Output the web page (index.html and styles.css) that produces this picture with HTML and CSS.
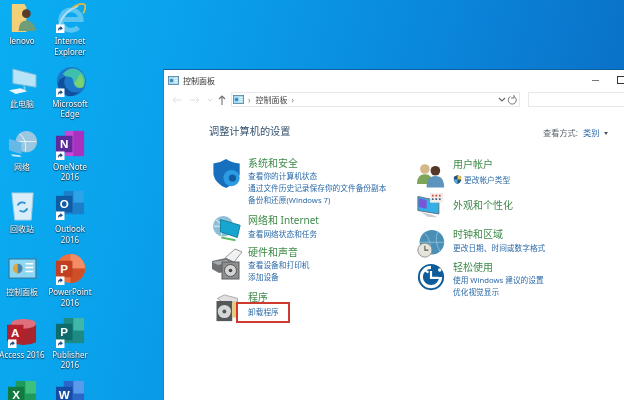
FILE: index.html
```html
<!DOCTYPE html>
<html lang="zh-CN">
<head>
    <meta charset="UTF-8">
    <title>控制面板</title>
    <link rel="stylesheet" href="styles.css">
</head>
<body>
<svg class="defs" width="0" height="0">
    <symbol id="arrow" viewBox="0 0 10 10">
        <rect width="10" height="10" fill="#fff"/>
        <path d="M2.5 8V5.5Q2.5 3.5 5 3.500V2L8 4.500 5 7V5.500Q3.500 5.500 2.500 8Z" fill="#1d4f8f"/>
    </symbol>
    <symbol id="cp" viewBox="0 0 14 11">
        <rect x=".5" y=".5" width="13" height="10" fill="#a9dcf2" stroke="#4a7f9c"/>
        <circle cx="4.500" cy="5.500" r="2.200" fill="#3f88b5"/>
        <path d="M8 3h4M8 5.500h4M8 8h4" stroke="#fff"/>
    </symbol>
</svg>

<div class="desktop">
    <div class="shortcut">
        <svg viewBox="0 0 32 32"><path d="M5 1h13l2 3v26H5z" fill="#f3cf77"/><circle cx="20" cy="11" r="4.500" fill="#5a3b2a"/><path d="M12 29q0-11 8-11t10 11z" fill="#6f9d7a"/></svg>
        <span>lenovo</span>
    </div>
    <div class="shortcut">
        <svg viewBox="0 0 32 32"><path d="M7 17h20A10.500 10.500 0 1 0 24 25" fill="none" stroke="#5cc4f0" stroke-width="5"/><path d="M4 24Q8 9 24 3" fill="none" stroke="#a9e0f6" stroke-width="2"/><path d="M18 5Q27-1 31 2q1 4-2 9" fill="none" stroke="#e3b93e" stroke-width="1.800"/><use href="#arrow" x="1" y="22" width="9" height="9"/></svg>
        <span>Internet<br>Explorer</span>
    </div>
    <div class="shortcut">
        <svg viewBox="0 0 32 32"><path d="M6 3l24 6v13L6 18z" fill="#b7e4f6" stroke="#6bb7dc"/><path d="M18 21v4" stroke="#8ccbe8" stroke-width="2"/><path d="M2 25l12-2 7 3-12 3z" fill="#eaf6fb"/></svg>
        <span>此电脑</span>
    </div>
    <div class="shortcut">
        <svg viewBox="0 0 32 32"><circle cx="17" cy="16" r="15" fill="#1b78c9"/><path d="M8 8Q18-3 29 8q4 8 0 14-8 3-10-5 0-6-5-6-4 0-6-3z" fill="#3fbfae"/><path d="M26 8q5 6 3 14-6 2-9-4z" fill="#7bd06f"/><path d="M3 20q0-8 8-9-4 8 3 14 6 4 12 1-6 6-13 5-8-3-10-11z" fill="#0f4f9e"/><use href="#arrow" x="1" y="23" width="9" height="9"/></svg>
        <span>Microsoft<br>Edge</span>
    </div>
    <div class="shortcut">
        <svg viewBox="0 0 32 32"><circle cx="20" cy="13" r="11" fill="#9cc7e0"/><path d="M13 5q8 6 6 18M12 13h18" stroke="#e8f4fa" fill="none"/><path d="M2 10l13 4v12L2 22z" fill="#66b9e6"/><path d="M4 26l9 1 2 2-9-1z" fill="#d8eef8"/></svg>
        <span>网络</span>
    </div>
    <div class="shortcut">
        <svg viewBox="0 0 32 32"><rect x="10" y="2" width="20" height="26" fill="#c648d6"/><rect x="19" y="2" width="11" height="26" fill="#a832bd"/><rect x="1" y="7" width="17" height="17" fill="#5c2a9c"/><text x="9.500" y="20" class="badge">N</text><use href="#arrow" x="1" y="23" width="9" height="9"/></svg>
        <span>OneNote<br>2016</span>
    </div>
    <div class="shortcut">
        <svg viewBox="0 0 32 32"><path d="M5 2h22l-2 28H8z" fill="#d9eef8" stroke="#9fcfe6"/><path d="M11 15a5 5 0 0 1 8-2M21 18a5 5 0 0 1-8 2" fill="none" stroke="#2f93cf" stroke-width="2"/></svg>
        <span>回收站</span>
    </div>
    <div class="shortcut">
        <svg viewBox="0 0 32 32"><rect x="9" y="0" width="21" height="24" fill="#1c7fc9"/><rect x="19" y="0" width="11" height="12" fill="#2ba3e6"/><rect x="1" y="5" width="17" height="17" fill="#0f5ca5"/><text x="9.500" y="18" class="badge">O</text><use href="#arrow" x="1" y="21" width="9" height="9"/></svg>
        <span>Outlook<br>2016</span>
    </div>
    <div class="shortcut">
        <svg viewBox="0 0 32 32"><rect x="2" y="5" width="28" height="20" fill="#8fd6f2" stroke="#2c86b4" stroke-width="1.500"/><circle cx="11" cy="15" r="5" fill="#e3a63c"/><path d="M11 15V10a5 5 0 0 1 0 10z" fill="#3f88b5"/><path d="M19 10h8M19 14h8M19 18h8" stroke="#fff" stroke-width="1.500"/></svg>
        <span>控制面板</span>
    </div>
    <div class="shortcut">
        <svg viewBox="0 0 32 32"><circle cx="16" cy="15" r="15" fill="#ea6f41"/><path d="M16 0a15 15 0 0 1 15 15H16z" fill="#f28d66"/><path d="M16 15h15a15 15 0 0 1-15 15z" fill="#cf4f27"/><rect x="1" y="7" width="17" height="17" fill="#c0401f"/><text x="9.500" y="20" class="badge">P</text><use href="#arrow" x="1" y="23" width="9" height="9"/></svg>
        <span>PowerPoint<br>2016</span>
    </div>
    <div class="shortcut">
        <svg viewBox="0 0 32 32"><path d="M4 6v20q13 6 26 0V6z" fill="#a8242f"/><ellipse cx="17" cy="7" rx="13" ry="5" fill="#de6f7c"/><rect x="0" y="8" width="17" height="17" fill="#b5202c"/><text x="8.500" y="21" class="badge">A</text><use href="#arrow" x="1" y="23" width="9" height="9"/></svg>
        <span>Access 2016</span>
    </div>
    <div class="shortcut">
        <svg viewBox="0 0 32 32"><rect x="9" y="1" width="21" height="26" fill="#1d8a84"/><rect x="19" y="1" width="11" height="13" fill="#3fb8a8"/><rect x="1" y="7" width="17" height="17" fill="#0d6b6b"/><text x="9.500" y="20" class="badge">P</text><use href="#arrow" x="1" y="23" width="9" height="9"/></svg>
        <span>Publisher<br>2016</span>
    </div>
    <div class="shortcut">
        <svg viewBox="0 0 32 32"><rect x="9" y="1" width="21" height="26" fill="#1f9a5b"/><rect x="19" y="1" width="11" height="13" fill="#3cc07c"/><rect x="1" y="7" width="17" height="17" fill="#107a41"/><text x="9.500" y="20" class="badge">X</text></svg>
    </div>
    <div class="shortcut">
        <svg viewBox="0 0 32 32"><rect x="9" y="1" width="21" height="26" fill="#2a67c9"/><rect x="19" y="1" width="11" height="13" fill="#5a9aea"/><rect x="1" y="7" width="17" height="17" fill="#164ca3"/><text x="9.500" y="20" class="badge">W</text></svg>
    </div>
</div>

<div class="window">
    <div class="titlebar">
        <svg class="small-cp"><use href="#cp"/></svg>
        <span class="title">控制面板</span>
        <span class="win-min"></span>
        <span class="win-max"></span>
    </div>
    <div class="navbar">
        <div class="nav-btns">
            <svg width="58" height="14" viewBox="0 0 58 14">
                <path d="M1 7h9M4 4L1 7l3 3" fill="none" stroke="#dfe2e5"/>
                <path d="M18 7h9M24 4l3 3-3 3" fill="none" stroke="#dfe2e5"/>
                <path d="M36 6l2 2 2-2" fill="none" stroke="#d4d8dc"/>
                <path d="M50 12V3M47 6l3-3 3 3" fill="none" stroke="#6c7177" stroke-width="1.100"/>
            </svg>
        </div>
        <div class="address">
            <svg class="small-cp"><use href="#cp"/></svg>
            <span class="crumb-arrow">›</span>
            <span class="crumb">控制面板</span>
            <span class="crumb-arrow">›</span>
            <span class="address-tools">
                <svg width="20" height="12" viewBox="0 0 20 12">
                    <path d="M1 4l3 3 3-3" fill="none" stroke="#666" stroke-width="1.100"/>
                    <path d="M16 2.500a4 4 0 1 1-3.500 0M16 1v3h-3" fill="none" stroke="#777"/>
                </svg>
            </span>
        </div>
        <div class="search"></div>
    </div>

    <div class="panel">
        <div class="panel-head">
            <h1>调整计算机的设置</h1>
            <div class="view-by">查看方式: <a>类别</a><i class="caret"></i></div>
        </div>
        <div class="columns">
            <div class="col col-left">
                <div class="cat cat-system">
                    <svg viewBox="0 0 32 32"><path d="M1 5Q9 4 15 0q6 4 15 5v12q-2 9-15 15Q3 27 1 17z" fill="#1670bd"/><circle cx="21" cy="21" r="9" fill="#2d9be2"/><circle cx="22" cy="21" r="4" fill="#0f5da3"/></svg>
                    <div class="cat-text">
                        <h2>系统和安全</h2>
                        <a>查看你的计算机状态</a>
                        <a>通过文件历史记录保存你的文件备份副本</a>
                        <a>备份和还原(Windows 7)</a>
                    </div>
                </div>
                <div class="cat cat-net">
                    <svg viewBox="0 0 32 32"><circle cx="12" cy="13" r="11" fill="#8dbfd6"/><path d="M4 6q8 4 6 17M2 13h20" stroke="#e9f5fa" fill="none"/><path d="M9 6l21 6-3 13L9 19z" fill="#16a6cf" stroke="#0d7d9e"/><path d="M10 24l15 3v2l-15-3z" fill="#5dbb63"/></svg>
                    <div class="cat-text">
                        <h2>网络和 Internet</h2>
                        <a>查看网络状态和任务</a>
                    </div>
                </div>
                <div class="cat cat-hw">
                    <svg viewBox="0 0 32 32"><path d="M14 10L24 1l7 3-8 10z" fill="#f1f1f1" stroke="#999"/><path d="M1 13l14-3 8 4v8L8 25 1 21z" fill="#6e7275"/><path d="M1 14l14-2 5 2-13 3z" fill="#a9acae"/><rect x="11" y="14" width="17" height="17" fill="#8d8f90" stroke="#5a5c5e"/><circle cx="19.500" cy="22.500" r="6" fill="#d5d5d5" stroke="#555"/><circle cx="19.500" cy="22.500" r="1.800" fill="#444"/></svg>
                    <div class="cat-text">
                        <h2>硬件和声音</h2>
                        <a>查看设备和打印机</a>
                        <a>添加设备</a>
                    </div>
                </div>
                <div class="cat cat-prog">
                    <svg viewBox="0 0 32 32"><path d="M5 5l8-4 15 4v4L13 11z" fill="#e0e0e0" stroke="#a0a0a0"/><rect x="4" y="8" width="18" height="23" fill="#55585a"/><rect x="22" y="9" width="6" height="18" fill="#e7c976"/><circle cx="13" cy="20" r="7.500" fill="#d6d8d8"/><circle cx="13" cy="20" r="2.200" fill="#555"/></svg>
                    <div class="cat-text">
                        <h2>程序</h2>
                        <a class="marked">卸载程序</a>
                    </div>
                </div>
            </div>
            <div class="col col-right">
                <div class="cat cat-user">
                    <svg viewBox="0 0 32 32"><circle cx="9" cy="8" r="5.500" fill="#d5b88a"/><path d="M0 25q0-11 9-11t9 11z" fill="#7da65a"/><circle cx="21" cy="10" r="5.500" fill="#54392b"/><path d="M11 29q0-13 10-13t10 13z" fill="#5d94bd"/></svg>
                    <div class="cat-text">
                        <h2>用户帐户</h2>
                        <a class="with-shield"><svg viewBox="0 0 10 10"><path d="M1 2l4-2 4 2v4q-1 3-4 4-3-1-4-4z" fill="#24507f"/><path d="M5 0l4 2v3H5z" fill="#e6c64c"/><path d="M1 5h4v5Q2 9 1 6z" fill="#58b0d8"/></svg>更改帐户类型</a>
                    </div>
                </div>
                <div class="cat cat-look">
                    <svg viewBox="0 0 32 32"><path d="M1 4l24 5v15L1 20z" fill="#34aee6" stroke="#5b6a78"/><path d="M2 6l9 2v10l-9-2z" fill="#7a56d6"/><path d="M5 22l13 3 6 3-12-1z" fill="#c9ccd0"/><rect x="15" y="0" width="15" height="11" fill="#f1eeea"/><path d="M17 2h2v2h-2zM21 2h2v2h-2zM25 2h2v2h-2z" fill="#c5453c"/><path d="M17 6h2v2h-2zM21 6h2v2h-2zM25 6h2v2h-2z" fill="#4b5d76"/></svg>
                    <div class="cat-text">
                        <h2>外观和个性化</h2>
                    </div>
                </div>
                <div class="cat cat-clock">
                    <svg viewBox="0 0 32 32"><circle cx="17" cy="14" r="14" fill="#4a8fb5"/><path d="M9 4q8 8 6 23M3 14h28M24 2q-5 10 2 22" stroke="#8dc0d8" fill="none"/><circle cx="9" cy="23" r="8" fill="#e7e4dc" stroke="#8a8a86"/><path d="M9 18v5h4" fill="none" stroke="#555" stroke-width="1.200"/></svg>
                    <div class="cat-text">
                        <h2>时钟和区域</h2>
                        <a>更改日期、时间或数字格式</a>
                    </div>
                </div>
                <div class="cat cat-ease">
                    <svg viewBox="0 0 32 32"><circle cx="16" cy="16" r="15" fill="#0e5d9a"/><path d="M16 5a11 11 0 1 0 11 11" fill="none" stroke="#fff" stroke-width="3.500"/><path d="M16 9v8h9M9 8l4 3" fill="none" stroke="#fff" stroke-width="2.500"/><circle cx="26" cy="8" r="2" fill="#fff"/></svg>
                    <div class="cat-text">
                        <h2>轻松使用</h2>
                        <a>使用 Windows 建议的设置</a>
                        <a>优化视觉显示</a>
                    </div>
                </div>
            </div>
        </div>
    </div>
</div>
</body>
</html>
```

FILE: styles.css
```css
*, *::after {
    box-sizing: border-box;
}

html, body {
    height: 100%;
}

body {
    margin: 0;
    overflow: hidden;
    position: relative;
    font-family: "Noto Sans", "Noto Sans CJK SC", sans-serif;
    background: linear-gradient(105deg, #0aaef2 0%, #0aa2ec 25%, #0a86da 62%, #0a68bf 100%);
}

h1, h2 {
    margin: 0;
    font-weight: normal;
}

.defs {
    position: absolute;
}

/* desktop icons */
.desktop {
    display: grid;
    grid-template-columns: 44px 52px;
    grid-auto-rows: 62.8px;
    height: 400px;
    overflow: hidden;
    padding: 3px 0 0 0;
    filter: blur(.35px);
}

.shortcut {
    display: flex;
    flex-direction: column;
    align-items: center;
    color: #fff;
    font-size: 8px;
    line-height: 10.5px;
    text-align: center;
    white-space: nowrap;
    text-shadow: 0 0 1.500px #123a58, 0 1px 1px #123a58;
}

.shortcut svg {
    width: 31px;
    height: 31px;
    flex: none;
    margin-bottom: 2px;
}

.badge {
    font-family: "Liberation Sans", sans-serif;
    font-size: 12px;
    font-weight: bold;
    fill: #fff;
    text-anchor: middle;
    text-shadow: none;
}

/* window */
.window {
    position: absolute;
    left: 163px;
    top: 69px;
    width: 461px;
    height: 331px;
    overflow: hidden;
    background: #fff;
    border: 1px solid #0d8ccc;
    border-top-color: #0b5f9e;
    border-right: 0;
    border-bottom: 0;
    color: #3c4a58;
    font-size: 8px;
    filter: blur(.35px);
}

.titlebar {
    display: flex;
    align-items: center;
    height: 20px;
    padding-left: 4px;
    font-size: 8px;
    color: #333;
}

.small-cp {
    width: 11px;
    height: 9px;
    flex: none;
}

.title {
    margin-left: 4px;
}

.win-min {
    width: 7px;
    height: 1px;
    margin-left: auto;
    background: #777;
}

.win-max {
    width: 8px;
    height: 8px;
    margin: 0 -1px 0 18px;
    border: 1px solid #333;
}

.navbar {
    display: flex;
    align-items: center;
    height: 15px;
    margin-top: 2px;
    padding-left: 8px;
}

.nav-btns {
    width: 59px;
    height: 14px;
    flex: none;
}

.address {
    display: flex;
    align-items: center;
    flex: none;
    gap: 4px;
    width: 289px;
    height: 15px;
    padding: 0 1px 0 1px;
    border: 1px solid #e6e8ea;
    color: #444;
}

.crumb {
    margin-left: 1px;
}

.crumb-arrow {
    color: #777;
    font-size: 8px;
    line-height: 10px;
}

.address-tools {
    display: flex;
    margin-left: auto;
}

.search {
    width: 100px;
    height: 15px;
    flex: none;
    margin-left: 8px;
    border: 1px solid #e6e8ea;
}

/* control panel content */
.panel {
    padding: 0 0 0 45px;
}

.panel-head {
    display: flex;
    justify-content: space-between;
    align-items: center;
    height: 15px;
    margin-top: 17px;
}

.panel-head h1 {
    font-size: 10.200px;
    line-height: 15px;
    color: #33526f;
}

.view-by {
    width: 81px;
    flex: none;
    color: #5a6570;
    font-size: 8.200px;
    white-space: nowrap;
}

.view-by a {
    margin-left: 3px;
    color: #2b6aa8;
}

.caret {
    display: inline-block;
    margin-left: 5px;
    vertical-align: 1px;
    border: 2.500px solid transparent;
    border-top: 3px solid #4a5560;
    border-bottom: 0;
}

.columns {
    display: flex;
    margin-top: 18px;
}

.col {
    display: flex;
    flex-direction: column;
}

.col-left {
    width: 208px;
    padding-left: 2px;
}

.cat {
    display: flex;
    gap: 5px;
}

.cat > svg {
    width: 32px;
    height: 32px;
    flex: none;
}

.cat-text {
    display: flex;
    flex-direction: column;
    align-items: flex-start;
    white-space: nowrap;
}

.cat-text h2 {
    font-size: 10px;
    line-height: 13px;
    color: #3f8a4a;
}

.cat-text a {
    font-size: 7.700px;
    line-height: 12px;
    color: #2b6aa8;
}

.cat-system > svg {
    height: 29px;
    margin-top: 2px;
}

.cat-net {
    margin-top: 8px;
}

.cat-net > svg {
    height: 30px;
}

.cat-net a {
    margin-top: 1px;
}

.cat-hw {
    margin-top: 2px;
}

.cat-hw > svg {
    margin-top: 2px;
}

.cat-prog {
    margin-top: 8px;
}

.cat-prog > svg {
    height: 28px;
    margin-top: 3px;
}

.cat-text .marked {
    position: relative;
    margin-top: 2px;
}

/* red box drawn over the screenshot */
.marked::after {
    content: "";
    position: absolute;
    left: -12px;
    top: -4.500px;
    width: 54px;
    height: 21px;
    border: 2px solid #cf3a30;
}

.col-right .cat {
    gap: 8px;
}

.col-right .cat > svg {
    width: 28px;
    height: 28px;
}

.cat-user {
    margin-top: 1px;
}

.col-right .cat-user > svg {
    margin-top: 3.500px;
}

.cat-user a {
    margin-top: 2.500px;
}

.cat-look {
    margin-top: 3.500px;
}

.cat-look h2 {
    margin-top: 5.500px;
}

.cat-clock {
    margin-top: 6.500px;
}

.col-right .cat-clock > svg {
    margin-top: 2.500px;
}

.cat-clock a {
    margin-top: 1.500px;
}

.cat-ease {
    margin-top: 2.500px;
}

.col-right .cat-ease > svg {
    margin-top: 2.500px;
}

.with-shield {
    display: flex;
    align-items: center;
    gap: 2px;
}

.with-shield svg {
    width: 9px;
    height: 9px;
}
```
